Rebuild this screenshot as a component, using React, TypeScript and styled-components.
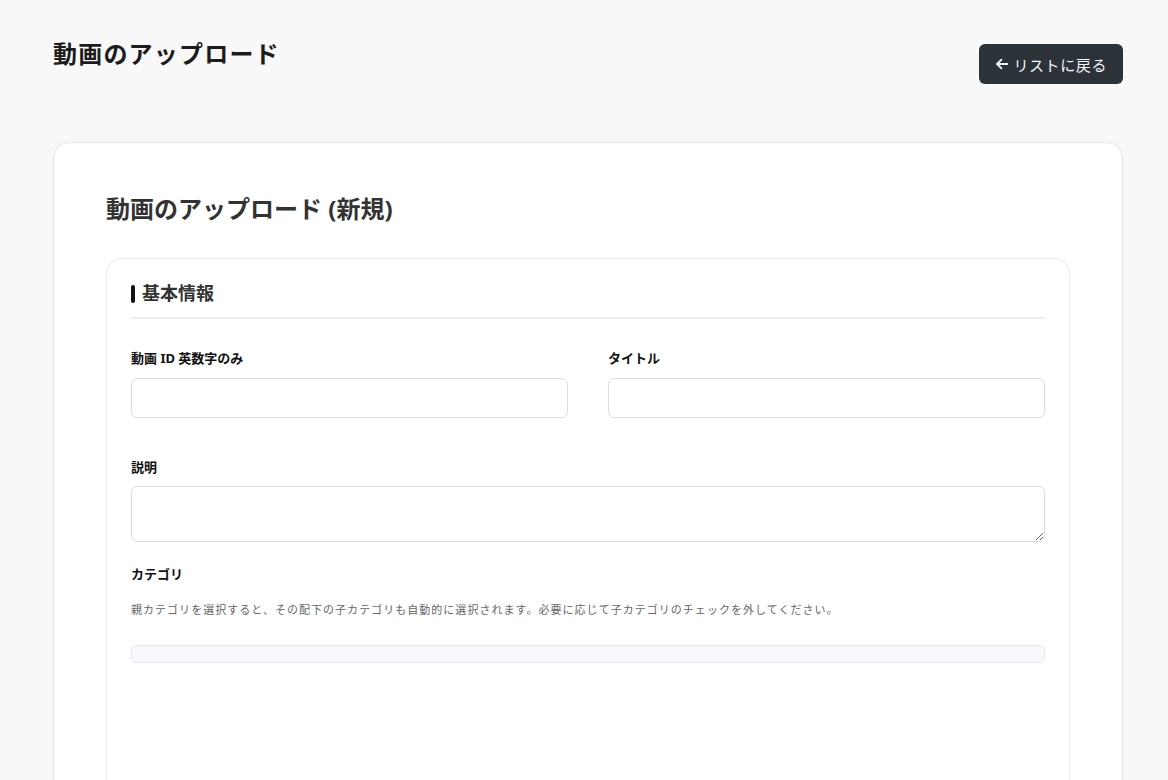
import React from "react";
import styled, { createGlobalStyle } from "styled-components";

const Global = createGlobalStyle`
  html, body { margin: 0; padding: 0; overflow: hidden; background: #f8f8f8; }
  body { font-family: "Noto Sans", "Noto Sans CJK JP", sans-serif; color: #212529; }
  * { box-sizing: border-box; }
`;

const Page = styled.div`
  width: 1070px;
  margin-left: 53px;
  padding-top: 36px;
`;

const Header = styled.header`
  display: flex;
  justify-content: space-between;
  align-items: flex-start;
  height: 106px;
`;

const PageTitle = styled.h1`
  margin: 0;
  font-size: 24px;
  line-height: 36px;
  font-weight: 700;
  letter-spacing: 1.2px;
  color: #1c1c1c;
`;

const BackButton = styled.button`
  margin-top: 8px;
  height: 40px;
  padding: 0 16px;
  display: flex;
  align-items: center;
  gap: 4px;
  border: none;
  border-radius: 6px;
  background: #2b3238;
  color: #f4f5f6;
  font-family: inherit;
  font-size: 15px;
  font-weight: 400;
  letter-spacing: 0.6px;
  cursor: pointer;
`;

const Card = styled.section`
  background: #fff;
  border: 1px solid #e4e4e4;
  border-radius: 16px;
  padding: 48px 52px 0;
  min-height: 700px;
`;

const CardTitle = styled.h2`
  margin: 0 0 31px;
  font-size: 24px;
  line-height: 36px;
  font-weight: 700;
  color: #333;
`;

const Section = styled.div`
  border: 1px solid #ececec;
  border-radius: 16px;
  padding: 24px 24px 160px;
`;

const SectionHeader = styled.div`
  display: flex;
  align-items: center;
  gap: 7px;
  padding-bottom: 12px;
  border-bottom: 2px solid #eeeeee;
`;

const Bar = styled.span`
  width: 4px;
  height: 18px;
  border-radius: 2px;
  background: #111;
`;

const SectionTitle = styled.h3`
  margin: 0;
  font-size: 18px;
  line-height: 21.6px;
  font-weight: 700;
  color: #333;
`;

const Row = styled.div`
  display: grid;
  grid-template-columns: 1fr 1fr;
  column-gap: 40px;
  margin-top: 30px;
`;

const Field = styled.div<{ $mt?: number }>`
  display: flex;
  flex-direction: column;
  margin-top: ${(p) => p.$mt ?? 0}px;
`;

const Label = styled.label<{ $mb?: number }>`
  font-size: 13px;
  line-height: 19.5px;
  font-weight: 700;
  color: #111;
  margin-bottom: ${(p) => p.$mb ?? 10}px;
`;

const Input = styled.input`
  height: 40px;
  border: 1px solid #dddddd;
  border-radius: 6px;
  background: #fff;
  padding: 0 12px;
  font-family: inherit;
  font-size: 14px;
  outline: none;
`;

const TextArea = styled.textarea`
  display: block;
  height: 56px;
  border: 1px solid #dddddd;
  border-radius: 6px;
  background: #fff;
  padding: 8px 12px;
  font-family: inherit;
  font-size: 14px;
  outline: none;
  resize: vertical;
`;

const Help = styled.p`
  margin: 18px 0 0;
  font-size: 11px;
  line-height: 16.5px;
  letter-spacing: 1.03px;
  color: #666;
`;

const CategoryBox = styled.div`
  margin-top: 26px;
  height: 18px;
  border: 1px solid #e4e6ee;
  border-radius: 6px;
  background: #f8f9fc;
`;

const ArrowLeft = () => (
  <svg width="14" height="14" viewBox="0 0 24 24" fill="none" stroke="currentColor" strokeWidth="3.2" strokeLinecap="round" strokeLinejoin="round">
    <path d="M21 12H4" />
    <path d="M11 4.5L3.5 12l7.5 7.5" />
  </svg>
);

export default function App() {
  return (
    <>
      <Global />
      <Page>
        <Header>
          <PageTitle>動画のアップロード</PageTitle>
          <BackButton>
            <ArrowLeft />
            リストに戻る
          </BackButton>
        </Header>
        <Card>
          <CardTitle>動画のアップロード (新規)</CardTitle>
          <Section>
            <SectionHeader>
              <Bar />
              <SectionTitle>基本情報</SectionTitle>
            </SectionHeader>
            <Row>
              <Field>
                <Label>動画 ID 英数字のみ</Label>
                <Input />
              </Field>
              <Field>
                <Label>タイトル</Label>
                <Input />
              </Field>
            </Row>
            <Field $mt={40}>
              <Label $mb={8}>説明</Label>
              <TextArea />
            </Field>
            <Field $mt={23}>
              <Label $mb={0}>カテゴリ</Label>
            </Field>
            <Help>親カテゴリを選択すると、その配下の子カテゴリも自動的に選択されます。必要に応じて子カテゴリのチェックを外してください。</Help>
            <CategoryBox />
          </Section>
        </Card>
      </Page>
    </>
  );
}
